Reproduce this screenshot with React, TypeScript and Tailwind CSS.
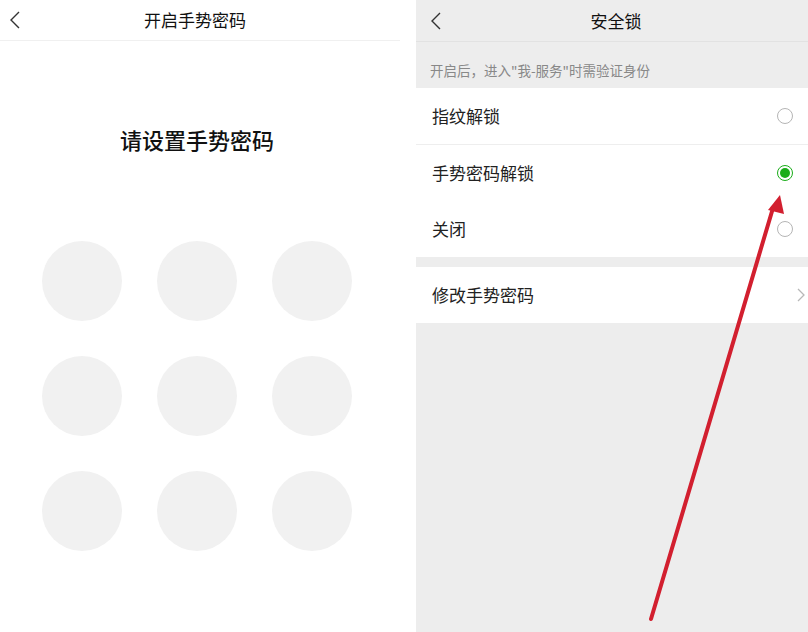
const font = { fontFamily: '"Noto Sans CJK SC", "Noto Sans", sans-serif' };

function Back() {
  return (
    <svg width="12" height="18" viewBox="0 0 12 18" className="shrink-0">
      <polyline points="10,1 2,9 10,17" fill="none" stroke="#333" strokeWidth="1.4" />
    </svg>
  );
}

function Radio({ checked }: { checked?: boolean }) {
  if (checked) {
    return (
      <div className="w-[16px] h-[16px] rounded-full border border-[#1aad19] flex items-center justify-center">
        <div className="w-[10px] h-[10px] rounded-full bg-[#1aad19]" />
      </div>
    );
  }
  return <div className="w-[16px] h-[16px] rounded-full border border-[#b5b5b5]" />;
}

function Row({ label, right, border }: { label: string; right: React.ReactNode; border?: boolean }) {
  return (
    <div className={"flex items-center pl-[16px] pr-[15px] " + (border ? "h-[57px] border-b border-[#eeeeee]" : "h-[56px]")}>
      <span className="flex-1 text-[17px] text-[#222]">{label}</span>
      {right}
    </div>
  );
}

export default function App() {
  return (
    <div className="flex w-[808px] h-[632px] bg-white overflow-hidden" style={font}>
      {/* left: gesture setup */}
      <div className="w-[400px] h-full flex flex-col bg-white">
        <div className="h-[41px] flex items-center px-[9px] border-b border-[#f0f0f0]">
          <Back />
          <div className="flex-1 text-center text-[17px] text-[#111] pr-[22px]">开启手势密码</div>
        </div>
        <div className="pt-[83px] text-center text-[22px] leading-[30px] font-medium text-[#111] pr-[6px]">请设置手势密码</div>
        <div className="mt-[87px] ml-[42px] grid grid-cols-[80px_80px_80px] gap-x-[35px] gap-y-[35px]">
          {Array.from({ length: 9 }).map((_, i) => (
            <div key={i} className="w-[80px] h-[80px] rounded-full bg-[#f1f1f1]" />
          ))}
        </div>
      </div>
      <div className="w-[16px] h-full bg-white" />
      {/* right: security lock */}
      <div className="w-[392px] h-full bg-[#ededed] flex flex-col relative">
        <div className="h-[42px] flex items-center px-[14px] border-b border-[#e2e2e2]">
          <Back />
          <div className="flex-1 text-center text-[17px] text-[#111] pr-[4px]">安全锁</div>
        </div>
        <div className="h-[46px] flex items-center pl-[14px] pt-[10px] text-[13.5px] text-[#888]">
          开启后，进入"我-服务"时需验证身份
        </div>
        <div className="bg-white">
          <Row label="指纹解锁" right={<Radio />} border />
          <Row label="手势密码解锁" right={<Radio checked />} />
          <Row label="关闭" right={<Radio />} />
        </div>
        <div className="h-[10px]" />
        <div className="bg-white">
          <div className="flex items-center h-[56px] pl-[16px] pr-[3px]">
            <span className="flex-1 text-[17px] text-[#222]">修改手势密码</span>
            <svg width="8" height="14" viewBox="0 0 8 14">
              <polyline points="1,1 7,7 1,13" fill="none" stroke="#b8b8b8" strokeWidth="1.3" />
            </svg>
          </div>
        </div>
        {/* red annotation arrow */}
        <svg className="absolute left-0 top-0 pointer-events-none" width="392" height="632" viewBox="0 0 392 632">
          <line x1="235" y1="619" x2="357" y2="208" stroke="#d21f2f" strokeWidth="4" strokeLinecap="round" />
          <polygon points="364,195 352,210 368,214" fill="#d21f2f" />
        </svg>
      </div>
    </div>
  );
}
